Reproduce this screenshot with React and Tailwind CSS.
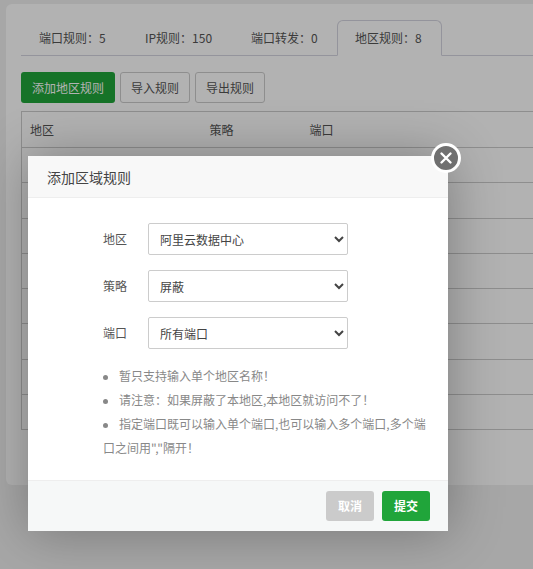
const tabs = [
    { text: "端口规则：5", cls: "w-[106px] h-9 pl-[18px] flex items-center" },
    { text: "IP规则：150", cls: "w-[106px] h-9 pl-[18px] flex items-center" },
    { text: "端口转发：0", cls: "w-[104px] h-9 pl-[18px] flex items-center" },
    { text: "地区规则：8", cls: "w-[105px] h-9 pl-[17px] flex items-center bg-white border border-[#d5d5e0] border-b-white rounded-t-md" },
];
const rows = [1, 2, 3, 4, 5, 6, 7, 8];
const hints = [
    "暂只支持输入单个地区名称！",
    "请注意：如果屏蔽了本地区,本地区就访问不了！",
    "指定端口既可以输入单个端口,也可以输入多个端口,多个端口之间用\",\"隔开！",
];

// one label + select line in the dialog form
function Field({ label, value }) {
    return (
        <div className="flex items-center h-8">
            <label className="w-[45px] text-[#555]">{label}</label>
            <select
                defaultValue={value}
                className="w-[200px] h-8 pl-[7px] bg-white border border-[#ccc] rounded-[2px] text-[#444] text-xs"
            >
                <option>{value}</option>
            </select>
        </div>
    );
}

export default function App() {
    return (
        <div
            className="relative w-[533px] h-[569px] overflow-hidden bg-[#f0f0f0] text-xs text-[#555]"
            style={{ fontFamily: '"Noto Sans CJK SC", "Liberation Sans", sans-serif' }}
        >
            {/* Page behind the dialog */}
            <div className="ml-1.5 pt-1">
                <div className="w-[560px] h-[481px] bg-white rounded-md pt-4 pl-[15px]">
                    <div className="flex h-9 border-b border-[#d5d5e0] text-[#555]">
                        {tabs.map((t) => (
                            <div key={t.text} className={t.cls}>
                                {t.text}
                            </div>
                        ))}
                    </div>

                    <div className="flex gap-[5px] mt-4">
                        <button className="w-[94px] h-[31px] bg-[#20a53a] text-white rounded-[3px]">添加地区规则</button>
                        <button className="w-[70px] h-[31px] border border-[#ccc] rounded-[3px]">导入规则</button>
                        <button className="w-[70px] h-[31px] border border-[#ccc] rounded-[3px]">导出规则</button>
                    </div>

                    <table className="w-full mt-2 border border-[#ccc] border-collapse text-left">
                        <thead>
                            <tr className="h-9 border-b border-[#ccc]">
                                <th className="w-[180px] pl-2 font-normal">地区</th>
                                <th className="w-[100px] pl-2 font-normal">策略</th>
                                <th className="pl-2 font-normal">端口</th>
                            </tr>
                        </thead>
                        <tbody>
                            {rows.map((r) => (
                                <tr key={r} className="h-[35.25px] border-b border-[#ccc]">
                                    <td colSpan={3}></td>
                                </tr>
                            ))}
                        </tbody>
                    </table>
                </div>
            </div>

            {/* Overlay */}
            <div className="absolute inset-0 bg-black/30"></div>

            {/* Dialog */}
            <div className="absolute left-7 top-[156px] w-[420px] h-[375px] flex flex-col bg-white shadow-[1px_1px_50px_rgba(0,0,0,0.3)]">
                <div className="h-[42px] shrink-0 pl-[19px] flex items-center bg-[#f8f8f8] border-b border-[#eee] text-sm text-[#444]">
                    添加区域规则
                </div>

                <div className="flex-1 pt-[25px] pl-[75px] pr-5">
                    <div className="flex flex-col gap-[15px]">
                        <Field label="地区" value="阿里云数据中心" />
                        <Field label="策略" value="屏蔽" />
                        <Field label="端口" value="所有端口" />
                    </div>

                    <ul className="mt-[15px] list-none leading-6 text-[#888]">
                        {hints.map((h) => (
                            <li
                                key={h}
                                className="before:content-[''] before:inline-block before:w-[5px] before:h-[5px] before:rounded-full before:bg-[#888] before:mr-[11px] before:align-middle"
                            >
                                {h}
                            </li>
                        ))}
                    </ul>
                </div>

                <div className="h-[51px] shrink-0 flex items-center justify-end gap-2 pr-[18px] bg-[#f6f8f8] border-t border-[#eee]">
                    <button className="w-12 h-[30px] bg-[#cbcbcb] text-white font-bold rounded-[3px]">取消</button>
                    <button className="w-12 h-[30px] bg-[#20a53a] text-white font-bold rounded-[3px]">提交</button>
                </div>

                {/* Close button sits on the dialog corner */}
                <div className="absolute -top-[13px] -right-[13px] w-[30px] h-[30px] flex items-center justify-center rounded-full bg-[#707070] border-[3px] border-white">
                    <svg width="14" height="14" viewBox="0 0 14 14" stroke="white" strokeWidth="2.4" strokeLinecap="round">
                        <path d="M2.5 2.5 L11.5 11.5 M11.5 2.5 L2.5 11.5" />
                    </svg>
                </div>
            </div>
        </div>
    );
}
